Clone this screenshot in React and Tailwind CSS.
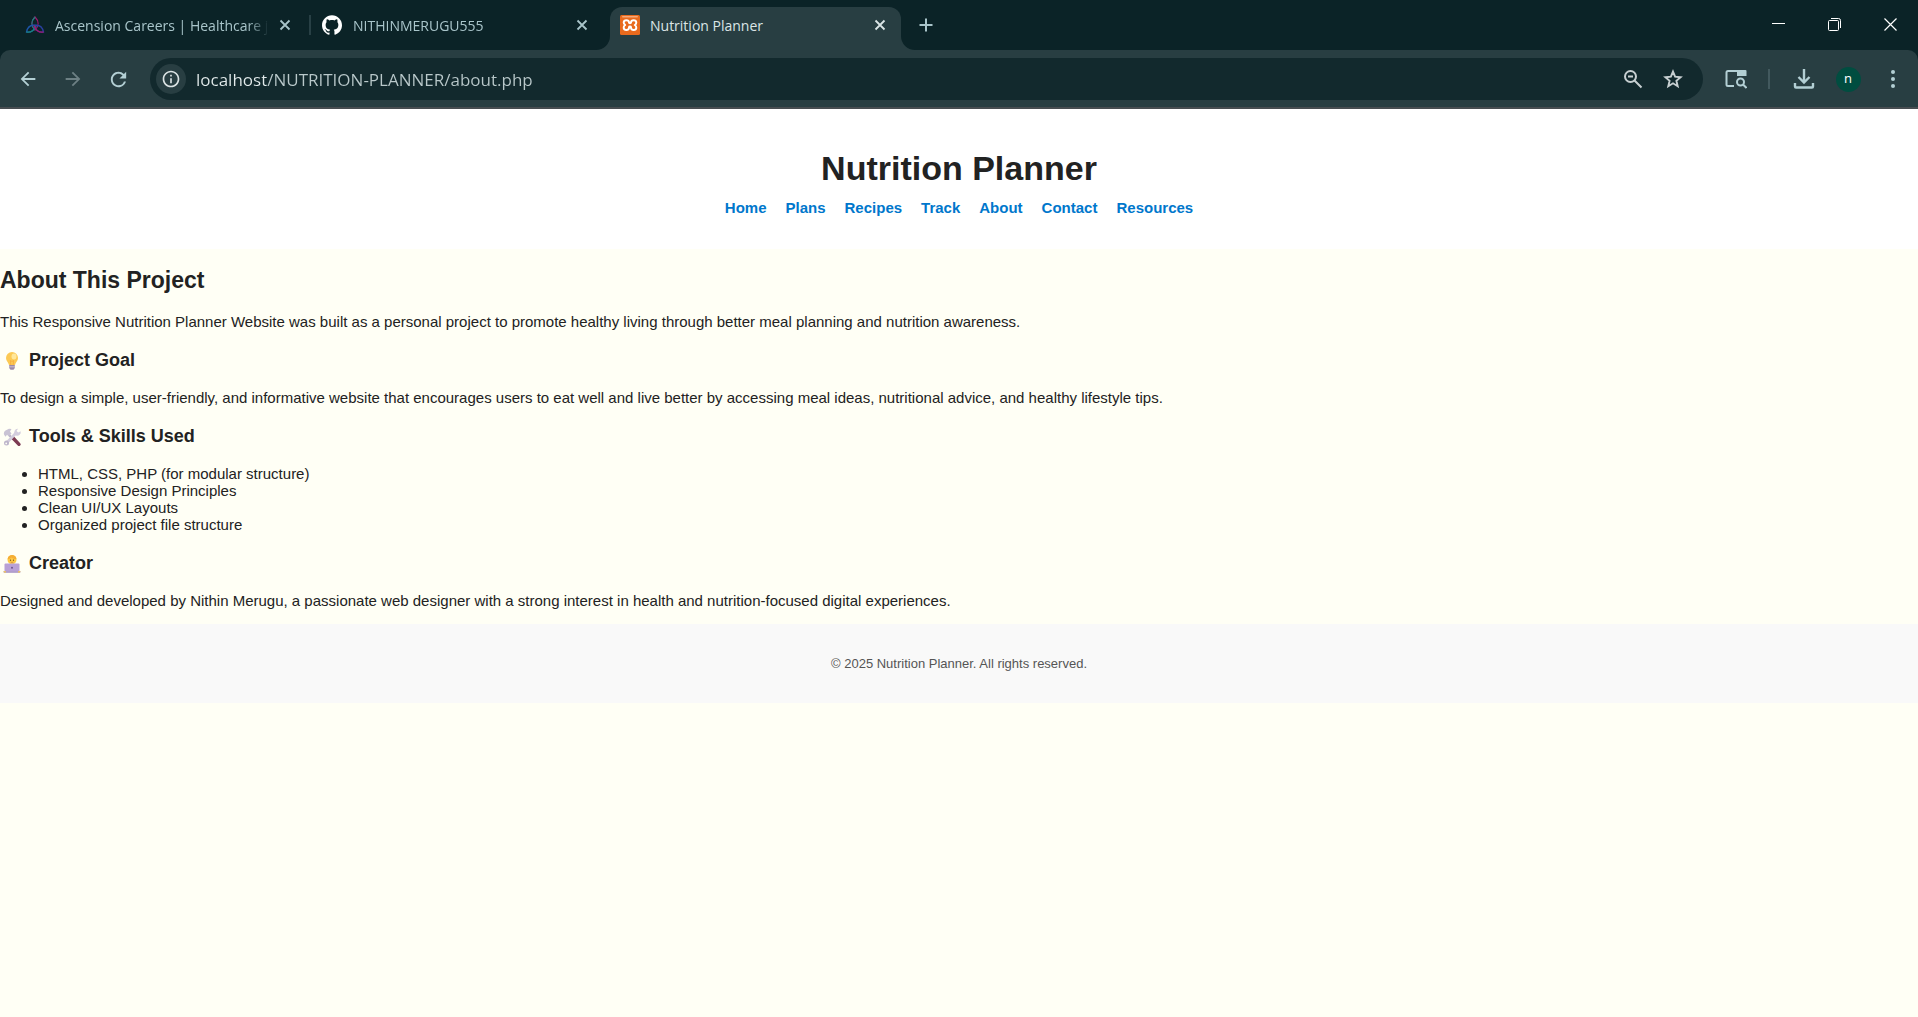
import React from "react";
import { SiGithub } from "react-icons/si";
import {
  MdArrowBack,
  MdArrowForward,
  MdRefresh,
  MdInfoOutline,
} from "react-icons/md";

function CareersLogo() {
  return (
    <svg viewBox="0 0 20 20" className="size-5 shrink-0" fill="none" strokeWidth="1.3">
      <path d="M10 2C6 6 6 11 10 15c4-4 4-9 0-13z" stroke="#a3176f" />
      <path d="M10 2C6 6 6 11 10 15" stroke="#17847f" />
      <path d="M1.500 17C2.500 12 6 9.500 11 10.500 10 15 6 18 1.500 17z" stroke="#1c55a8" />
      <path d="M1.500 17c4.500 1 8.500-2 9.500-6.500" stroke="#17847f" />
      <path d="M18.500 17C17.500 12 14 9.500 9 10.500 10 15 14 18 18.500 17z" stroke="#2a3fa0" />
      <path d="M18.500 17c-4.500 1-8.500-2-9.500-6.500" stroke="#a3176f" />
    </svg>
  );
}

function XamppLogo() {
  return (
    <svg viewBox="0 0 20 20" className="size-5 shrink-0">
      <rect width="20" height="20" rx="1.500" fill="#e96a1d" />
      <rect x="2" y="1" width="16" height="1.600" rx=".8" fill="#f6a878" />
      <path
        d="M9 7.300C8.800 4.600 4 4.400 3.700 7.400c-.1 1.200.7 2 1.500 2.600-.9.600-1.700 1.500-1.500 2.800.4 2.900 5 2.700 5.300 0l.1-.9c.1-.6 1.700-.6 1.800 0l.1.900c.3 2.700 5 2.900 5.300 0 .1-1.300-.6-2.200-1.500-2.800.9-.6 1.600-1.400 1.500-2.600-.3-3-5.100-2.800-5.300-.1"
        fill="none"
        stroke="#fff"
        strokeWidth="2"
        strokeLinecap="round"
        strokeLinejoin="round"
      />
      <path d="M9 7.300c0 1.300 2 1.300 2 0" fill="none" stroke="#fff" strokeWidth="1.800" />
    </svg>
  );
}

function CloseIcon() {
  return (
    <svg viewBox="0 0 12 12" className="size-3" stroke="currentColor" strokeWidth="1.800">
      <path d="M1.500 1.500l9 9M10.500 1.500l-9 9" />
    </svg>
  );
}

function Bulb() {
  return (
    <svg viewBox="0 0 20 20" className="size-5 shrink-0" aria-hidden="true">
      <path d="M10 1a6 6 0 0 0-6 6c0 3 2.400 4.300 3 7h6c.6-2.700 3-4 3-7a6 6 0 0 0-6-6z" fill="#fcc954" />
      <ellipse cx="12" cy="5.500" rx="2.500" ry="3" fill="#ffe79a" />
      <path d="M8.800 14L8.400 9.500l1.600 1 1.600-1-.4 4.500" fill="none" stroke="#f5a93c" strokeWidth=".8" />
      <path d="M7.200 14h5.600v3l-1.300 1.700h-3L7.200 17z" fill="#9b8aa8" />
      <path d="M7.200 15.800h5.600" stroke="#d5cbe0" strokeWidth=".8" />
    </svg>
  );
}

function Tools() {
  return (
    <svg viewBox="0 0 20 20" className="size-5 shrink-0" aria-hidden="true" strokeLinecap="round">
      <path d="M7 8l4 4" stroke="#b9b2c4" strokeWidth="2.400" />
      <path d="M11 11l6 6.300" stroke="#7d3b52" strokeWidth="3.400" />
      <path d="M2 7.500c-.5-1.500.2-3 1.500-4L7 1.800 9.500 2 8 4.500l1.500 2-2.700 2.700-1.800-1.500-1.500 2z" fill="#c9c3d4" />
      <path d="M14 6L5 15.500" stroke="#d3cddd" strokeWidth="2.800" />
      <path d="M13 7.500a3.500 3.500 0 0 1 3-5.700L14.500 4l1.800 1.600 2.300-1.400A3.500 3.500 0 0 1 14 8.500z" fill="#d3cddd" />
      <circle cx="4.500" cy="16" r="2.500" fill="#bdb5ca" />
      <circle cx="4.200" cy="16.400" r=".9" fill="#fffff5" />
    </svg>
  );
}

function Technologist() {
  return (
    <svg viewBox="0 0 20 20" className="size-5 shrink-0" aria-hidden="true">
      <path d="M4 16c0-4 1.500-6 6-6s6 2 6 6z" fill="#4fa3d9" />
      <circle cx="10" cy="5.800" r="4.500" fill="#fdc945" />
      <path d="M5.600 5.200C5.800 2.300 8 1 10 1s4.300 1 4.400 4c-2 .2-4-.5-5-1.500-.9 1-2.300 1.700-3.800 1.700z" fill="#f5ae35" />
      <circle cx="8.500" cy="6.200" r=".6" fill="#70441c" />
      <circle cx="11.500" cy="6.200" r=".6" fill="#70441c" />
      <path d="M8.700 8.100q1.300.8 2.600 0" stroke="#c0713a" strokeWidth=".6" fill="none" />
      <rect x="2.500" y="9.500" width="15" height="8" rx="1" fill="#b8a0d6" />
      <circle cx="10" cy="13.800" r="1" fill="#6d548f" />
      <path d="M1.500 17.200h17v.8a.8.8 0 0 1-.8.8H2.300a.8.8 0 0 1-.8-.8z" fill="#a48fc4" />
      <path d="M1.500 17.200H4v1.300H2zM16 17.200h2.500l-.5 1.300h-2z" fill="#fbc94a" />
    </svg>
  );
}

function Tab({ icon, title, gap }) {
  return (
    <div className="flex h-9 w-[297px] items-center pl-3 pr-[13px]">
      {icon}
      <span className={`${gap} mr-1 min-w-0 flex-1 overflow-hidden whitespace-nowrap pt-px mask-r-from-90% mask-r-to-100%`}>
        {title}
      </span>
      <button aria-label={`Close ${title}`} className="flex size-6 shrink-0 items-center justify-center">
        <CloseIcon />
      </button>
    </div>
  );
}

function TabStrip() {
  return (
    <div className="flex h-[50px] shrink-0 items-end bg-[#0b2327] font-['Open_Sans','Noto_Sans',sans-serif] text-sm text-[#a9c5ca]">
      <div className="mb-[7px] flex items-center pl-[13px]">
        <Tab icon={<CareersLogo />} title="Ascension Careers | Healthcare j" gap="ml-[10px]" />
        <div className="-mx-px h-5 w-0.5 bg-[#284045]" />
        <Tab icon={<SiGithub className="size-5 shrink-0 text-white" />} title="NITHINMERUGU555" gap="ml-[11px]" />
      </div>
      <div className="relative ml-[3px] flex h-[43px] w-[291px] shrink-0 items-center rounded-t-xl bg-[#283e42] pb-[7px] pl-[10px] pr-[9px] text-[#dbe5e6]">
        <svg viewBox="0 0 14 14" className="absolute -left-[14px] bottom-0 size-[14px]" fill="#283e42">
          <path d="M14 0v14H0A14 14 0 0 0 14 0z" />
        </svg>
        <svg viewBox="0 0 14 14" className="absolute -right-[14px] bottom-0 size-[14px]" fill="#283e42">
          <path d="M0 0v14h14A14 14 0 0 1 0 0z" />
        </svg>
        <XamppLogo />
        <span className="ml-[10px] flex-1 whitespace-nowrap pt-px">Nutrition Planner</span>
        <button aria-label="Close Nutrition Planner" className="flex size-6 items-center justify-center">
          <CloseIcon />
        </button>
      </div>
      <button aria-label="New tab" className="mb-[7px] ml-[7px] flex size-9 items-center justify-center">
        <svg viewBox="0 0 14 14" className="size-[14px]" stroke="currentColor" strokeWidth="2">
          <path d="M7 .5v13M.5 7h13" />
        </svg>
      </button>
      <div className="ml-auto flex h-full items-stretch pb-0.5 text-white">
        <button aria-label="Minimize" className="flex w-14 items-center justify-center">
          <svg viewBox="0 0 13 13" className="size-[13px]" stroke="currentColor">
            <path d="M0 5.500h13" />
          </svg>
        </button>
        <button aria-label="Restore" className="flex w-14 items-center justify-center">
          <svg viewBox="0 0 13 13" className="size-[13px]" fill="none" stroke="currentColor">
            <rect x=".5" y="2.500" width="10" height="10" rx="1" />
            <path d="M3 .5h7.500a2 2 0 0 1 2 2V10" />
          </svg>
        </button>
        <button aria-label="Close window" className="flex w-14 items-center justify-center">
          <svg viewBox="0 0 13 13" className="size-[13px]" stroke="currentColor" strokeWidth="1.200">
            <path d="M.5.5l12 12M12.500.5l-12 12" />
          </svg>
        </button>
      </div>
    </div>
  );
}

function ToolButton({ label, className = "", children }) {
  return (
    <button aria-label={label} className={`flex size-9 shrink-0 items-center justify-center ${className}`}>
      {children}
    </button>
  );
}

function Toolbar() {
  return (
    <div className="bg-[#0b2327]">
      <div className="flex h-[59px] items-center rounded-t-[10px] border-b-2 border-[#474d51] bg-[#283e42] pl-[10px] pr-[7px] pt-px text-[#b3cfd4]">
        <div className="flex gap-[9px]">
          <ToolButton label="Back"><MdArrowBack className="size-[22px]" /></ToolButton>
          <ToolButton label="Forward" className="text-[#6d8084]"><MdArrowForward className="size-[22px]" /></ToolButton>
          <ToolButton label="Reload"><MdRefresh className="size-[23px]" /></ToolButton>
        </div>
        <div className="ml-[14px] flex h-[42px] min-w-0 flex-1 items-center rounded-full bg-[#12292d] pl-[6px] pr-3 text-[#c7cfd1]">
          <button aria-label="View site information" className="flex size-[30px] shrink-0 items-center justify-center rounded-full bg-[#283e42] text-[#dbe3e4]">
            <MdInfoOutline className="size-5" />
          </button>
          <input
            aria-label="Address"
            defaultValue="localhost/NUTRITION-PLANNER/about.php"
            className="ml-[10px] h-8 min-w-0 flex-1 bg-[linear-gradient(90deg,#e3ebec_70px,#b9c8ca_70px)] bg-clip-text font-['Open_Sans','Noto_Sans',sans-serif] text-[17px] text-transparent outline-none"
          />
          <div className="flex gap-1">
            <ToolButton label="Zoom">
              <svg viewBox="0 0 20 20" className="size-5" fill="none" stroke="currentColor" strokeWidth="2">
                <circle cx="7.500" cy="7.500" r="5.500" />
                <path d="M11.500 11.500l7 7M5 7.500h5" />
              </svg>
            </ToolButton>
            <ToolButton label="Bookmark this page">
              <svg viewBox="0 0 20 20" className="size-5" fill="none" stroke="currentColor" strokeWidth="1.900">
                <path d="M10 2.600l2.100 5.100 5.500.5-4.200 3.600 1.300 5.400-4.700-2.900-4.700 2.900 1.300-5.400L2.400 8.200l5.500-.5z" />
              </svg>
            </ToolButton>
          </div>
        </div>
        <ToolButton label="Side panel search" className="ml-[15px]">
          <svg viewBox="0 0 22 20" className="h-5 w-[22px]" fill="none" stroke="currentColor" strokeWidth="2">
            <path d="M9 17H3a1.500 1.500 0 0 1-1.500-1.500v-12A1.500 1.500 0 0 1 3 2h9" />
            <path d="M12 1h8.500a1 1 0 0 1 1 1v5H12z" fill="currentColor" stroke="none" />
            <circle cx="15.500" cy="13" r="3.500" />
            <path d="M18 15.500l3.500 3.500" />
          </svg>
        </ToolButton>
        <div className="ml-[14px] h-5 w-0.5 bg-[#42595e]" />
        <ToolButton label="Downloads" className="ml-4">
          <svg viewBox="0 0 22 22" className="size-[22px]" fill="none" stroke="currentColor" strokeWidth="2.400">
            <path d="M11 1v13M5.500 9l5.500 5.500L16.500 9M2 15v3.500a1 1 0 0 0 1 1h16a1 1 0 0 0 1-1V15" />
          </svg>
        </ToolButton>
        <ToolButton label="Profile" className="ml-2">
          <span className="flex size-[25px] items-center justify-center rounded-full bg-[#004d40] pb-0.5 font-['Open_Sans',sans-serif] text-[13px] leading-none text-white">n</span>
        </ToolButton>
        <ToolButton label="Menu" className="ml-[9px]">
          <svg viewBox="0 0 4 18" className="h-[18px] w-1" fill="currentColor">
            <circle cx="2" cy="2" r="2" />
            <circle cx="2" cy="9" r="2" />
            <circle cx="2" cy="16" r="2" />
          </svg>
        </ToolButton>
      </div>
    </div>
  );
}

const links = ["Home", "Plans", "Recipes", "Track", "About", "Contact", "Resources"];
const skills = [
  "HTML, CSS, PHP (for modular structure)",
  "Responsive Design Principles",
  "Clean UI/UX Layouts",
  "Organized project file structure",
];

function SectionHeading({ icon, children }) {
  return (
    <h3 className="mb-[17px] mt-[19px] flex items-center gap-[7px] pl-0.5 text-lg/[23px] font-bold">
      {icon}
      {children}
    </h3>
  );
}

export default function App() {
  return (
    <div className="flex min-h-screen flex-col bg-[#fffff5] font-['Liberation_Sans',Arial,sans-serif] text-[15px]/[17px] text-[#222]">
      <TabStrip />
      <Toolbar />
      <header className="bg-white pb-[33px] pt-10 text-center">
        <h1 className="text-[34px]/[39px] font-bold">Nutrition Planner</h1>
        <nav className="mt-[11px] flex justify-center gap-[19px] font-bold text-[#0077cc]">
          {links.map((l) => (
            <a key={l} href="#">{l}</a>
          ))}
        </nav>
      </header>
      <main className="flow-root">
        <h2 className="mb-5 mt-[18px] text-[23px]/[26px] font-bold">About This Project</h2>
        <p>
          This Responsive Nutrition Planner Website was built as a personal project to promote healthy living through
          better meal planning and nutrition awareness.
        </p>
        <SectionHeading icon={<Bulb />}>Project Goal</SectionHeading>
        <p>
          To design a simple, user-friendly, and informative website that encourages users to eat well and live better
          by accessing meal ideas, nutritional advice, and healthy lifestyle tips.
        </p>
        <SectionHeading icon={<Tools />}>Tools &amp; Skills Used</SectionHeading>
        <ul className="list-disc pl-[38px]">
          {skills.map((s) => (
            <li key={s}>{s}</li>
          ))}
        </ul>
        <SectionHeading icon={<Technologist />}>Creator</SectionHeading>
        <p className="mb-[15px]">
          Designed and developed by Nithin Merugu, a passionate web designer with a strong interest in health and
          nutrition-focused digital experiences.
        </p>
      </main>
      <footer className="bg-[#f9f9f9] py-8 text-center text-[13px]/[15px] text-[#555]">
        © 2025 Nutrition Planner. All rights reserved.
      </footer>
    </div>
  );
}
